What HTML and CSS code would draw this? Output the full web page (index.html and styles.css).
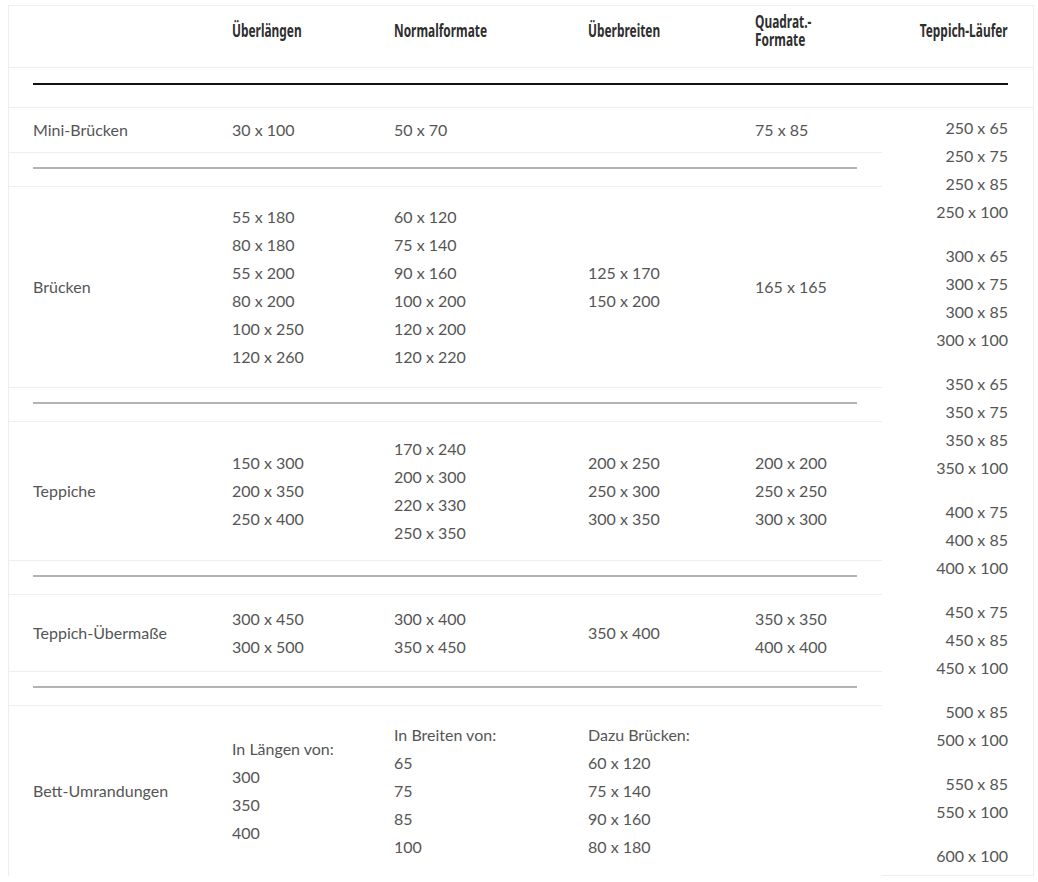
FILE: index.html
```html
<html>
    <head>
        <link rel="stylesheet" href="styles.css">
    </head>
    <body>
        <table class="formats">
            <colgroup>
                <col class="c-label">
                <col class="c-long">
                <col class="c-normal">
                <col class="c-wide">
                <col class="c-square">
                <col class="c-runner">
            </colgroup>
            <tr class="head">
                <th></th>
                <th><span>Überlängen</span></th>
                <th><span>Normalformate</span></th>
                <th><span>Überbreiten</span></th>
                <th><span>Quadrat.-<br>Formate</span></th>
                <th class="right"><span>Teppich-Läufer</span></th>
            </tr>
            <tr class="rule-row top-rule">
                <td colspan="6"><div class="rule dark"></div></td>
            </tr>
            <tr class="r-mini">
                <td>Mini-Brücken</td>
                <td>30 x 100</td>
                <td>50 x 70</td>
                <td></td>
                <td>75 x 85</td>
                <td class="runners" rowspan="9">
                    <p>250 x 65<br>250 x 75<br>250 x 85<br>250 x 100</p>
                    <p>300 x 65<br>300 x 75<br>300 x 85<br>300 x 100</p>
                    <p>350 x 65<br>350 x 75<br>350 x 85<br>350 x 100</p>
                    <p>400 x 75<br>400 x 85<br>400 x 100</p>
                    <p>450 x 75<br>450 x 85<br>450 x 100</p>
                    <p>500 x 85<br>500 x 100</p>
                    <p>550 x 85<br>550 x 100</p>
                    <p>600 x 100</p>
                </td>
            </tr>
            <tr class="rule-row">
                <td colspan="5"><div class="rule"></div></td>
            </tr>
            <tr class="r-bruecken">
                <td>Brücken</td>
                <td>55 x 180<br>80 x 180<br>55 x 200<br>80 x 200<br>100 x 250<br>120 x 260</td>
                <td>60 x 120<br>75 x 140<br>90 x 160<br>100 x 200<br>120 x 200<br>120 x 220</td>
                <td>125 x 170<br>150 x 200</td>
                <td>165 x 165</td>
            </tr>
            <tr class="rule-row">
                <td colspan="5"><div class="rule"></div></td>
            </tr>
            <tr class="r-teppiche">
                <td>Teppiche</td>
                <td>150 x 300<br>200 x 350<br>250 x 400</td>
                <td>170 x 240<br>200 x 300<br>220 x 330<br>250 x 350</td>
                <td>200 x 250<br>250 x 300<br>300 x 350</td>
                <td>200 x 200<br>250 x 250<br>300 x 300</td>
            </tr>
            <tr class="rule-row">
                <td colspan="5"><div class="rule"></div></td>
            </tr>
            <tr class="r-uebermasse">
                <td>Teppich-Übermaße</td>
                <td>300 x 450<br>300 x 500</td>
                <td>300 x 400<br>350 x 450</td>
                <td>350 x 400</td>
                <td>350 x 350<br>400 x 400</td>
            </tr>
            <tr class="rule-row">
                <td colspan="5"><div class="rule"></div></td>
            </tr>
            <tr class="r-bett last">
                <td>Bett-Umrandungen</td>
                <td>In Längen von:<br>300<br>350<br>400</td>
                <td>In Breiten von:<br>65<br>75<br>85<br>100</td>
                <td>Dazu Brücken:<br>60 x 120<br>75 x 140<br>90 x 160<br>80 x 180</td>
                <td></td>
            </tr>
        </table>
    </body>
</html>
```

FILE: styles.css
```css
body {
    margin: 5px 4px 0 8px;
    background: #fff;
    font-family: Lato, "PT Sans", "Open Sans", sans-serif;
    font-size: 15px;
    color: #555;
}
.formats {
    width: 1026px;
    table-layout: fixed;
    border-collapse: separate;
    border-spacing: 0;
    border-top: 1px solid #eee;
    border-left: 1px solid #eee;
    border-right: 1px solid #eee;
}
.c-label { width: 199px; }
.c-long { width: 162px; }
.c-normal { width: 194px; }
.c-wide { width: 167px; }
.c-square { width: 151px; }
.c-runner { width: 151px; }
.formats th,
.formats td {
    padding: 0 24px;
    border-bottom: 1px solid #eee;
    line-height: 28px;
    vertical-align: middle;
    text-align: left;
    white-space: nowrap;
}
/* condensed headline look, no narrow font installed */
.formats th {
    font-family: "Noto Sans", sans-serif;
    font-weight: bold;
    font-size: 17px;
    line-height: 18px;
    color: #2e2e2e;
    padding-bottom: 12px;
}
.formats th span {
    display: inline-block;
    transform: scaleX(0.7);
    transform-origin: left center;
}
.formats .right {
    text-align: right;
    padding-left: 0;
    padding-right: 25px;
}
.formats .right span {
    transform-origin: right center;
}
.head { height: 62px; }
.rule-row { height: 34px; }
.rule-row.top-rule { height: 40px; }
.formats .rule-row td {
    vertical-align: top;
    padding: 14px 25px 0 24px;
}
.formats .top-rule td { padding-top: 15px; }
.rule {
    height: 2px;
    background: #b3b3b3;
}
.rule.dark { background: #111; }
.r-mini { height: 45px; }
.r-bruecken { height: 201px; }
.r-teppiche { height: 139px; }
.r-uebermasse { height: 77px; }
.r-bett { height: 170px; }
.formats .last td { border-bottom: none; }
.formats td.runners {
    vertical-align: top;
    text-align: right;
    padding: 6px 25px 5px 24px;
    border-bottom: 1px solid #eee;
}
.runners p {
    margin: 0 0 16px;
}
.runners p:last-child {
    margin-bottom: 0;
}
```
